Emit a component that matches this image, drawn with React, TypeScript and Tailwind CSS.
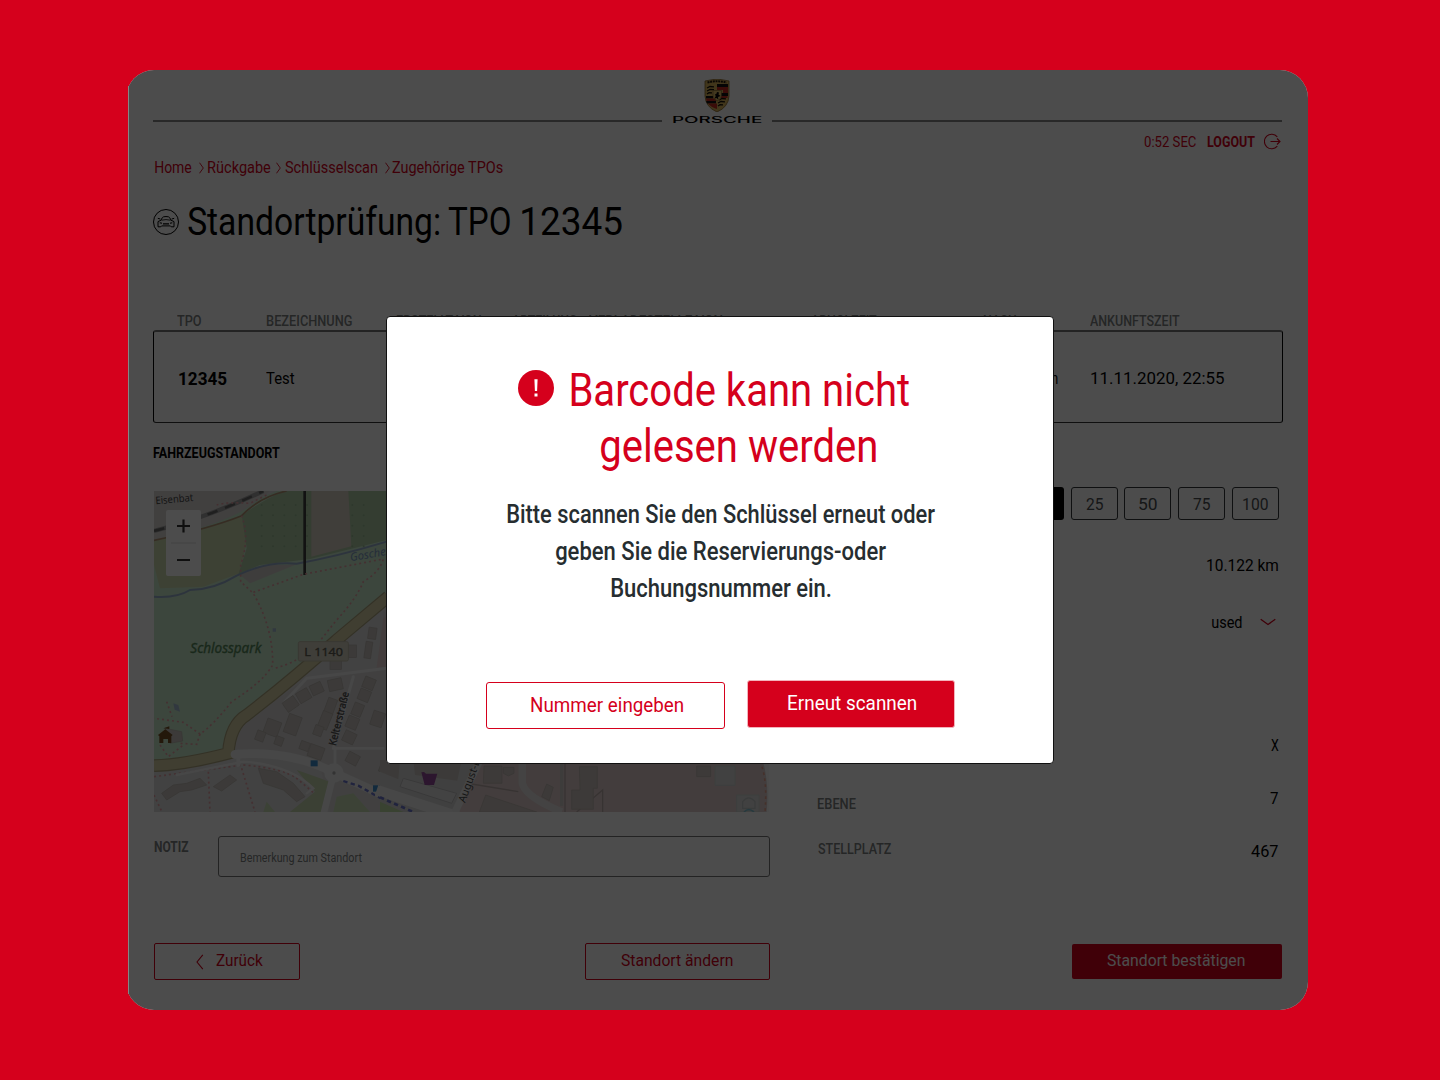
import { useLayoutEffect, useRef } from "react";
import type { ReactNode } from "react";

/* Single line of condensed type whose inked width is fitted to `w` pixels. */
function T({ w, className = "", children }: { w: number; className?: string; children: string }) {
  const outer = useRef<HTMLSpanElement>(null);
  const inner = useRef<HTMLSpanElement>(null);
  useLayoutEffect(() => {
    const o = outer.current!;
    const i = inner.current!;
    const cs = getComputedStyle(i);
    const ctx = document.createElement("canvas").getContext("2d")!;
    ctx.font = `${cs.fontWeight} ${cs.fontSize} ${cs.fontFamily}`;
    const m = ctx.measureText(children);
    const scale = w / (m.actualBoundingBoxLeft + m.actualBoundingBoxRight);
    o.style.width = `${w}px`;
    i.style.transform = `translateX(${m.actualBoundingBoxLeft * scale}px) scaleX(${scale})`;
  }, [w, children]);
  return (
    <span ref={outer} className={`block shrink-0 whitespace-nowrap ${className}`}>
      <span ref={inner} className="block w-max origin-left">
        {children}
      </span>
    </span>
  );
}

function Crest() {
  return (
    <svg width="26" height="33" viewBox="0 0 26 33" className="block">
      <path d="M1 2 Q7 .8 13 0 Q19 .8 25 2 V17 Q24.500 28 13 33 Q1.500 28 1 17Z" fill="#d9b45c" stroke="#8a6a2c" strokeWidth=".8" />
      <path d="M3.500 3.500 Q13 1 22.500 3.500" stroke="#221a0c" strokeWidth="2" strokeDasharray="2 .7" fill="none" />
      <path d="M13 5H24V8H13Z M13 14H24V17H17Z M2 22H12V24.500H3Z M2 17H9V19.500H2Z" fill="#111" />
      <path d="M13 8H24V11H13Z M17 17H23.500V19H17Z M2 19.500H12V22H2.500Z M4 24.500H13V30Q7 28 4 24.500Z" fill="#c22a1e" />
      <path d="M19 11H24V14H19Z" fill="#c22a1e" />
      <path d="M3 9l3-1.500 4 .3M3 12l3-1.500 4 .2M3 15l2-1.300 3 .2M15 21l3-1.500 4 .3M14 24l3-1.500 4 .3M14 27l2-1.300 3 .2" stroke="#17120a" strokeWidth="1.300" fill="none" />
      <path d="M9 11.500H17.500V17Q17 20.500 13 22Q9.500 20 9 17Z" fill="#e1bf69" stroke="#6d5220" strokeWidth=".5" />
      <path d="M13 13l2 .5-.5 2 2 1.500-2.500 1 .3 2.500-1.800-1.500-2 .5 1.300-2.500-1-1.500 1.500-.5z" fill="#080808" />
    </svg>
  );
}

function CarIcon() {
  return (
    <svg width="26" height="26" viewBox="0 0 26 26" fill="none" stroke="#000" strokeWidth="1" className="block shrink-0">
      <circle cx="13" cy="13" r="12.500" />
      <path d="M7.800 11.500L9.300 8.700Q9.700 8 10.600 7.800Q13 7.300 15.400 7.800Q16.300 8 16.700 8.700L18.200 11.500" />
      <path d="M8.500 11.200Q13 10 17.500 11.200" strokeWidth=".8" />
      <path d="M8 11.200L5 12.600V17.800H7.800L8.600 16.900H17.400L18.200 17.800H21V12.600L18 11.200M7.300 10L4.800 9.300M18.700 10L21.200 9.300" />
      <path d="M6.700 13.800L9 14.300M19.300 13.800L17 14.300M10 14.900H16" strokeWidth="1.100" />
    </svg>
  );
}

function LogoutIcon() {
  return (
    <svg width="17" height="17" viewBox="0 0 17 17" fill="none" stroke="#d5001c" strokeWidth="1.100" className="block shrink-0">
      <path d="M13.300 3.800A7.300 7.300 0 1 0 13.300 13.200" />
      <path d="M6.500 8.500H16M13 5.500L16 8.500L13 11.500" />
    </svg>
  );
}

function Chevron({ dir }: { dir: "right" | "left" | "down" }) {
  if (dir === "down")
    return (
      <svg width="16" height="8" viewBox="0 0 16 8" fill="none" stroke="#d5001c" strokeWidth="1.300" className="block shrink-0">
        <path d="M.7 1.200L8 6.500L15.300 1.200" />
      </svg>
    );
  if (dir === "left")
    return (
      <svg width="8" height="16" viewBox="0 0 8 16" fill="none" stroke="#d5001c" strokeWidth="1.100" className="block shrink-0">
        <path d="M6.800 .8L1 8L6.800 15.200" />
      </svg>
    );
  return (
    <svg width="5" height="12" viewBox="0 0 5 12" fill="none" stroke="#d5001c" strokeWidth=".9" className="block shrink-0">
      <path d="M.5 .7L4.300 6L.5 11.300" />
    </svg>
  );
}

const houses: [number, number, number, number, number][] = [
  [402, 640, 40, 34, -35], [442, 615, 38, 34, -30], [482, 595, 36, 32, -25], [535, 582, 42, 34, -12],
  [528, 640, 28, 46, 20], [510, 680, 30, 52, 22], [492, 722, 26, 30, 20], [345, 705, 44, 46, 20],
  [408, 690, 40, 58, 20], [318, 738, 26, 30, 20], [375, 755, 24, 26, 20], [450, 770, 28, 26, 20],
  [640, 578, 34, 34, 22], [626, 614, 34, 34, 22], [608, 655, 30, 38, 22], [590, 695, 34, 36, 22],
  [580, 740, 36, 34, 25], [476, 782, 44, 38, 20], [590, 805, 36, 32, 28], [665, 680, 36, 44, 18],
  [655, 428, 24, 34, 8], [645, 470, 20, 50, 8], [595, 480, 24, 38, 0], [540, 525, 34, 28, 0], [690, 830, 30, 34, 20],
];

function CityMap() {
  return (
    <svg width="615" height="321" viewBox="0 0 615 321" className="block">
      <g transform="scale(.33333) translate(-12 -18)">
        <rect x="12" y="18" width="1845" height="963" fill="#e0dfdf" />
        <path d="M12 160Q240 110 330 40L380 18H710V320L560 440L240 720L222 800L12 840Z" fill="#c8f0cd" />
        <path d="M12 18H360L290 70Q200 125 12 165Z" fill="#dcd8d6" />
        <path d="M12 168Q190 130 275 92L290 170L268 265L160 305L30 310L12 240Z" fill="#cddda9" />
        <path d="M275 92Q330 50 400 18H710V165L480 222L330 240L265 268L290 190Z" fill="#a9cda0" />
        <path d="M484 18H595L604 184L484 215Z" fill="#d9d0c0" />
        <path d="M268 268Q330 235 400 240L440 238L300 295Z" fill="#d2cfc8" />
        <g fill="#91b98a">
          {[0, 1, 2, 3, 4, 5, 6, 7, 8, 9].map((i) =>
            [0, 1, 2, 3, 4].map((j) =>
              i === 6 || i === 7 || i === 5 ? null : (
                <circle key={`${i}-${j}`} cx={335 + i * 34} cy={60 + j * 31} r="3" />
              ),
            ),
          )}
        </g>
        <path d="M12 335Q80 340 120 315Q190 315 260 272Q350 228 440 236Q560 215 710 170" stroke="#8fa9cf" strokeWidth="6" fill="none" />
        <path d="M12 138Q180 95 340 18" stroke="#9a9a9a" strokeWidth="13" fill="none" />
        <path d="M12 138Q180 95 340 18" stroke="#5a5a5a" strokeWidth="8" strokeDasharray="32 24" fill="none" />
        <path d="M12 166Q180 130 275 92Q330 35 410 18" stroke="#b08b66" strokeWidth="5" fill="none" />
        <path d="M464 18V270" stroke="#262626" strokeWidth="8" />
        <g stroke="#e99aa0" strokeWidth="5" strokeDasharray="6 9" fill="none">
          <path d="M275 92Q300 160 272 240V290L310 325Q370 430 368 540Q340 590 245 650Q190 720 150 747L100 712L12 700" />
          <path d="M310 322L460 268L700 222Q690 260 640 290Q620 340 560 405L500 480Q450 530 368 552" />
          <path d="M150 747L140 778L90 775M30 780L55 815L100 780M50 650L66 695" />
          <path d="M12 875Q200 850 280 840Q400 850 440 880L510 940M175 860L180 981M275 850L315 981M12 930L36 981M520 885L480 981M640 790H710" />
          <path d="M200 60Q230 50 300 55L350 30" />
        </g>
        <path d="M700 380L690 550L470 580L250 735V800Q420 790 510 840L540 981H710V380Z" fill="#dcdbdb" />
        <path d="M700 400L715 390V545L680 548Z" fill="#e3cccc" />
        <path d="M440 855L510 880L550 895L530 981H420L495 920Z" fill="#c4d7a8" />
        <path d="M350 950L375 981H340Z M560 935L610 925L660 981H550Z" fill="#c9e2b2" />
        <path d="M715 335L560 465Q420 590 290 690Q240 720 235 805Q100 840 12 842" stroke="#a89f72" strokeWidth="38" fill="none" />
        <path d="M715 335L560 465Q420 590 290 690Q240 720 235 805Q100 840 12 842" stroke="#d8d2a0" strokeWidth="31" fill="none" />
        <g stroke="#f4f4f4" strokeWidth="14" fill="none" strokeLinecap="round">
          <path d="M470 580L710 550M610 575L550 790M470 580L400 655" strokeWidth="9" />
          <path d="M555 790H700M555 790V850" strokeWidth="8" />
          <path d="M255 808Q420 795 550 862L710 935L900 1010" strokeWidth="26" />
          <path d="M550 870L520 990" strokeWidth="20" />
          <path d="M80 870L280 830Q420 840 490 910L470 925" strokeWidth="7" />
          <path d="M265 800V840" strokeWidth="12" />
          <circle cx="552" cy="864" r="22" fill="#f4f4f4" />
        </g>
        <circle cx="552" cy="864" r="5" fill="#a5a5a5" />
        <g fill="#c9c3bd" stroke="#b3aca5" strokeWidth="2">
          {houses.map(([x, y, w, h, r]) => (
            <rect key={`${x}-${y}`} x={x} y={y} width={w} height={h} transform={`rotate(${r} ${x + w / 2} ${y + h / 2})`} />
          ))}
          <path d="M35 925L70 900L110 895L150 880L170 900L125 915L90 920L50 945Z" />
          <path d="M190 905L240 870L260 885L215 918Z" />
          <path d="M325 850L380 860L430 895L465 935L440 950L400 915L340 895Z" />
          <path d="M45 730L95 740L98 768L60 775Z" />
        </g>
        <path d="M580 888L625 902L710 950" stroke="#5c68cf" strokeWidth="7" strokeDasharray="13 10" fill="none" />
        <rect x="482" y="826" width="21" height="18" fill="#2484cc" />
        <rect x="669" y="901" width="21" height="19" fill="#2484cc" />
        <path d="M24 750L46 733L68 750L64 754V774H54V762H40V774H28V754Z M40 730L58 724V732Z" fill="#683e0a" />
        <path d="M70 655L85 660L90 680L74 674Z M368 430H378V440H368Z" fill="#9fb9d5" />
        <g fontFamily="Noto Sans" fill="#333">
          <text x="17" y="58" fontSize="31" transform="rotate(-5 17 58)" textLength="114" lengthAdjust="spacingAndGlyphs">Eisenbat</text>
          <text x="602" y="229" fontSize="34" fontStyle="italic" fill="#6f8fc0" transform="rotate(-10 602 229)">Gosche</text>
          <text x="121" y="503" fontSize="41" fontStyle="italic" fill="#3f7a45" textLength="213" lengthAdjust="spacingAndGlyphs" stroke="#3f7a45" strokeWidth="1">Schlosspark</text>
          <text x="557" y="784" fontSize="31" transform="rotate(-76 557 784)" textLength="166" lengthAdjust="spacingAndGlyphs" stroke="#333" strokeWidth="1">Kelterstraße</text>
        </g>
        <rect x="445" y="470" width="150" height="58" rx="5" fill="#d6d3bf" stroke="#bab6a0" strokeWidth="3" />
        <text x="463" y="513" fontSize="35" fontFamily="Noto Sans" fill="#4c4a3c" stroke="#4c4a3c" strokeWidth="1" textLength="116" lengthAdjust="spacingAndGlyphs">L 1140</text>
      </g>
      <g transform="scale(.33333) translate(678 747)">
        <path d="M0 60H1167V216H0Z" fill="#d9d9d9" />
        <path d="M290 60H1148Q1165 130 1160 216H235Z" fill="#e4cfce" />
        <path d="M0 60H60L55 118L0 95Z M100 60H245L232 122L105 105Z" fill="#c9c3bd" />
        <path d="M70 115L230 160L215 190L60 140Z" fill="#e6e4e6" stroke="#bdbdbd" strokeWidth="3" />
        <path d="M0 185L70 216H0Z" fill="#bfdf9c" />
        <path d="M-10 150Q80 180 235 230" stroke="#f4f4f4" strokeWidth="32" fill="none" />
        <path d="M0 172L100 216" stroke="#5c68cf" strokeWidth="8" strokeDasharray="13 10" fill="none" />
        <path d="M300 60L225 216" stroke="#f0f0f0" strokeWidth="22" />
        <path d="M275 132L415 155M555 60V216M590 216L668 150V216" stroke="#b8a5a3" strokeWidth="4" fill="none" />
        <path d="M427 60V130Q435 170 545 216" stroke="#e9e7e7" strokeWidth="22" fill="none" />
        <path d="M545 60V198" stroke="#cfc8c6" strokeWidth="10" />
        <path d="M124 97L132 96L138 101H172L162 135H134Z" fill="#8c3492" />
        <g fill="#cbc2bc" stroke="#b7aca6" strokeWidth="2">
          <path d="M312 78H366V130H310Z M370 82H402V100L385 108L370 100Z M317 165L470 216H298Z M500 132L520 142L508 182L485 170Z" />
          <path d="M598 80H652V145H640V208H575V150H600Z M950 78H992V110H950Z" />
        </g>
        <path d="M1005 78H1065V136H1005Z M1070 165H1137V216H1070Z" fill="#dededc" stroke="#c9d2d0" strokeWidth="3" />
        <path d="M1088 205V185Q1106 162 1125 185V205Z" fill="none" stroke="#bfc4c4" strokeWidth="4" />
        <path d="M1092 216Q1106 202 1122 216" stroke="#76bfd0" strokeWidth="5" fill="none" />
        <path d="M1146 80Q1162 130 1155 216" stroke="#ec9c86" strokeWidth="5" strokeDasharray="8 10" fill="none" />
        <path d="M1148 60Q1168 130 1160 216H1170V60Z" fill="#fff" />
        <text x="255" y="190" fontSize="32" fontFamily="Noto Sans" fill="#333" transform="rotate(-70 255 190)">August-B</text>
      </g>
    </svg>
  );
}

function Charge({ w, ml, children }: { w: number; ml: number; children: string }) {
  return (
    <div className="flex h-[33px] w-[47px] shrink-0 items-center justify-center rounded-[3px] border border-[#323639] pt-px text-[17px] leading-5 text-[#4a4e51]" style={{ marginLeft: ml }}>
      <T w={w}>{children}</T>
    </div>
  );
}

function Value({ children, className }: { children: ReactNode; className: string }) {
  return <div className={`flex h-5 items-center justify-end text-[17px] leading-5 ${className}`}>{children}</div>;
}

function Header() {
  return (
    <header className="flex h-[54px] items-end">
      <div className="mb-[2px] h-[2px] w-[509px] bg-[#888]" />
      <div className="ml-[10px] flex w-[90px] flex-col items-center">
        <Crest />
        <T w={90} className="mt-1 h-[8px] font-['Inter'] text-[8.500px] leading-[8px] font-medium">PORSCHE</T>
      </div>
      <div className="mb-[2px] ml-[10px] h-[2px] w-[510px] bg-[#888]" />
    </header>
  );
}

function Page() {
  return (
    <div className="h-full bg-white pl-[27.500px] font-['Roboto',sans-serif] text-black">
      <Header />
      <div className="mt-[9px] flex h-[17px] w-[1128px] items-center justify-end text-[14.500px] leading-[17px] text-[#d5001c]">
        <T w={52} className="mt-px">0:52 SEC</T>
        <T w={48} className="mt-px ml-[11px] font-bold">LOGOUT</T>
        <span className="ml-[9px]"><LogoutIcon /></span>
      </div>
      <nav className="mt-[8px] flex h-[19px] items-center pl-[2px] text-[16.500px] leading-[19px] text-[#d5001c]">
        <T w={37}>Home</T>
        <span className="ml-[7px]"><Chevron dir="right" /></span>
        <T w={63} className="ml-[4px]">Rückgabe</T>
        <span className="ml-[5px]"><Chevron dir="right" /></span>
        <T w={92} className="ml-[4px]">Schlüsselscan</T>
        <span className="ml-[8px]"><Chevron dir="right" /></span>
        <T w={111} className="ml-[2px]">Zugehörige TPOs</T>
      </nav>
      <h1 className="mt-[25px] flex h-[40px] items-center text-[39px] leading-[40px]">
        <CarIcon />
        <T w={251} className="ml-[9px]">Standortprüfung:</T>
        <T w={62} className="ml-[9px]">TPO</T>
        <T w={100} className="ml-[12px]">12345</T>
      </h1>
      <div className="mt-[71px] flex h-[17px] items-center pl-6 text-[14px] leading-[17px] font-medium text-[#7c7f81]">
        <T w={24}>TPO</T>
        <T w={85} className="ml-[66px]">BEZEICHNUNG</T>
        <T w={84} className="ml-[45px]">ERSTELLT VON</T>
        <T w={65} className="ml-[31px]">ABTEILUNG</T>
        <T w={133} className="ml-[12px]">VERLADESTELLE VON</T>
        <T w={66} className="ml-[89px]">ABHOLZEIT</T>
        <T w={32} className="ml-[107px]">NACH</T>
        <T w={90} className="ml-[74px]">ANKUNFTSZEIT</T>
      </div>
      <div className="flex h-[93px] w-[1130px] items-center rounded-[3px] border border-t-2 border-black border-t-[#777] border-b-[#333] pt-px pl-[25px] text-[17px] leading-5">
        <T w={48} className="mt-[3px] text-[17.500px] font-bold">12345</T>
        <T w={28} className="ml-[39px]">Test</T>
        <T w={77} className="ml-[687px]">Zuffenhausen</T>
        <T w={133} className="ml-[33px]">11.11.2020, 22:55</T>
      </div>
      <T w={127} className="mt-[22px] h-[17px] text-[14px] leading-[17px] font-bold">FAHRZEUGSTANDORT</T>
      <div className="flex h-[481px]">
        <div className="w-[617px] pt-[29px] pl-px">
          <div className="relative h-[321px] w-[615px] overflow-hidden bg-[#ccc]">
            <div className="opacity-85">
              <CityMap />
            </div>
            <div className="absolute top-[19px] left-[12px] h-[66px] w-[35px] rounded-[2px] bg-white">
              <svg width="35" height="66" viewBox="0 0 35 66" stroke="#333" strokeWidth="2.200">
                <path d="M11 16H24M17.500 9.500V22.500M11 50H24" />
                <path d="M5 33H30" stroke="#ddd" strokeWidth="1" />
              </svg>
            </div>
          </div>
          <div className="mt-[24px] flex h-[41px] w-[616px]">
            <T w={35} className="mt-[3px] text-[14px] leading-[17px] font-bold text-[#7c7f81]">NOTIZ</T>
            <div className="ml-[29px] flex grow items-center rounded-[3px] border border-[#777] pt-[2px] pl-[21px] text-[12px] leading-4 text-[#7c7f81]">
              <T w={122}>Bemerkung zum Standort</T>
            </div>
          </div>
        </div>
        <div className="ml-[47px] w-[462px] pt-[25px]">
          <div className="flex">
            <div className="ml-[200px] h-[33px] w-[47px] shrink-0 rounded-[3px] bg-black" />
            <Charge w={17} ml={7}>25</Charge>
            <Charge w={18} ml={6}>50</Charge>
            <Charge w={17} ml={7}>75</Charge>
            <Charge w={25} ml={7}>100</Charge>
          </div>
          <Value className="mt-[35px] pr-px"><T w={71}>10.122 km</T></Value>
          <Value className="mt-[37px] pr-[3px]">
            <T w={30}>used</T>
            <span className="ml-[18px]"><Chevron dir="down" /></span>
          </Value>
          <Value className="mt-[103px]"><T w={8}>X</T></Value>
          <div className="mt-[33px] flex h-[25px] justify-between text-[17px]">
            <T w={38} className="mt-[8px] ml-[1px] text-[14px] leading-[17px] font-medium text-[#7c7f81]">EBENE</T>
            <T w={8} className="mr-px leading-5">7</T>
          </div>
          <div className="mt-[26px] flex justify-between text-[17px]">
            <T w={73} className="mt-[2px] ml-[1px] text-[14px] leading-[17px] font-medium text-[#7c7f81]">STELLPLATZ</T>
            <T w={27} className="mt-[2px] mr-px leading-5">467</T>
          </div>
        </div>
      </div>
      <footer className="ml-px flex h-[37px] text-[17px] leading-5 text-[#d5001c]">
        <div className="flex w-[146px] items-center rounded-[2px] border border-[#d5001c] pl-[41px]">
          <Chevron dir="left" />
          <T w={47} className="mb-[3px] ml-[12px]">Zurück</T>
        </div>
        <div className="ml-[285px] flex w-[185px] items-center justify-center rounded-[2px] border border-[#d5001c]">
          <T w={112} className="mr-[2px] mb-[3px]">Standort ändern</T>
        </div>
        <div className="mt-px ml-[302px] flex h-[35px] w-[210px] items-center justify-center rounded-[2px] bg-[#d5001c] text-white">
          <T w={138} className="mr-[3px] mb-[3px]">Standort bestätigen</T>
        </div>
      </footer>
    </div>
  );
}

function Dialog() {
  return (
    <div className="flex h-[448px] w-[668px] flex-col items-center rounded-[4px] border border-[#111] bg-white font-['Roboto',sans-serif] text-[#d5001c]">
      <div className="mt-[45px] flex h-[56px] w-full items-center pl-[130.500px]">
        <div className="mb-[4px] flex size-[36.500px] items-center justify-center rounded-full bg-[#d5001c] text-white">
          <svg width="6" height="20" viewBox="0 0 6 20" fill="currentColor">
            <path d="M1.400 1.300H4.600L4.100 13H1.900ZM1.500 15.600H4.500V18.600H1.500Z" />
          </svg>
        </div>
        <T w={338} className="ml-[17px] text-[46.500px] leading-[56px]">Barcode kann nicht</T>
      </div>
      <T w={275} className="ml-[37px] text-[46.500px] leading-[56px]">gelesen werden</T>
      <div className="mt-[22px] ml-[2px] flex flex-col items-center text-[25.500px] leading-[37px] font-medium text-[#262d30]">
        <T w={428}>Bitte scannen Sie den Schlüssel erneut oder</T>
        <T w={330}>geben Sie die Reservierungs-oder</T>
        <T w={220}>Buchungsnummer ein.</T>
      </div>
      <div className="mt-[73px] flex w-full pl-[98.500px] text-[20.500px] leading-6">
        <div className="mt-[2px] flex h-[47px] w-[239px] items-center justify-center rounded-[3px] border border-[#d5001c]">
          <T w={152} className="ml-[3px] mb-px">Nummer eingeben</T>
        </div>
        <div className="ml-[22px] flex h-[48px] w-[208px] items-center justify-center rounded-[3px] border border-[#f3b3bb] bg-[#d5001c] text-white">
          <T w={128} className="mb-[3px] ml-[2px]">Erneut scannen</T>
        </div>
      </div>
    </div>
  );
}

export default function App() {
  return (
    <main className="h-[1080px] w-[1440px] overflow-hidden bg-[#d5001c] pt-[70px] pl-[128px]">
      <div className="relative h-[940px] w-[1180px] overflow-hidden">
        <div className="-ml-[2.500px] h-full w-[1182.500px] overflow-hidden rounded-[28px]">
          <div className="relative h-full w-[1184px]">
            <Page />
            <div className="absolute inset-0 bg-black/70" />
          </div>
        </div>
        <div className="absolute top-[16px] left-0 h-[908px] w-px bg-[#858585]" />
        <div className="absolute inset-0 flex items-center justify-center pl-[4px]">
          <Dialog />
        </div>
      </div>
    </main>
  );
}
